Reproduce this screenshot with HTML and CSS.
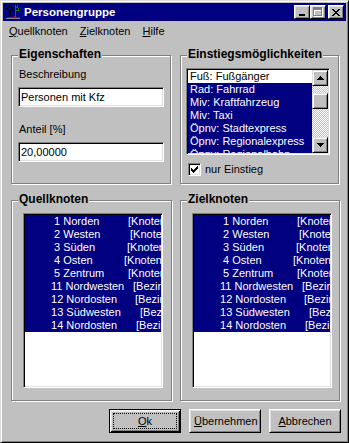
FILE: index.html
```html
<!DOCTYPE html>
<html lang="de">
<head>
    <meta charset="UTF-8">
    <meta name="viewport" content="width=device-width, initial-scale=1.0">
    <title>Personengruppe</title>
    <link rel="stylesheet" href="styles.css">
</head>
<body>
    <div class="window">
        <div class="titlebar">
            <svg class="appicon" width="16" height="16" viewBox="0 0 16 16">
                <path fill="#000" d="M2 2h5v1H2z M1 3h2v2H1z M6 3h2v3H6z M5 6h2v1H5z M4 7h2v2H4z M4 10h2v2H4z"/>
                <path fill="#008000" d="M10 1h1v12h-1z M11 3h2v1h-2z M12 1h1v2h-1z M11 6h3v1h-3z M13 4h1v2h-1z"/>
                <path fill="#c00000" d="M2 13h13v1H2z M9 12h1v1H9z"/>
                <path fill="#808080" d="M1 14h14v1H1z"/>
            </svg>
            <span class="title">Personengruppe</span>
            <div class="caption-btns">
                <span class="cbtn">
                    <svg width="8" height="7" viewBox="0 0 8 7"><path fill="#000" d="M1 5h6v2H1z"/></svg>
                </span>
                <span class="cbtn">
                    <svg width="10" height="10" viewBox="0 0 10 10">
                        <path fill="#fff" d="M1 1h9v9H1z M2 4h7v5H2z" fill-rule="evenodd"/>
                        <path fill="#808080" d="M0 0h9v9H0z M1 3h7v5H1z" fill-rule="evenodd"/>
                    </svg>
                </span>
                <span class="cbtn close">
                    <svg width="8" height="7" viewBox="0 0 8 7"><path fill="#000" d="M0 0h2v1H0z M6 0h2v1H6z M1 1h2v1H1z M5 1h2v1H5z M2 2h4v1H2z M3 3h2v1H3z M2 4h4v1H2z M1 5h2v1H1z M5 5h2v1H5z M0 6h2v1H0z M6 6h2v1H6z"/></svg>
                </span>
            </div>
        </div>
        <div class="menubar">
            <span class="menu"><u>Q</u>uellknoten</span>
            <span class="menu"><u>Z</u>ielknoten</span>
            <span class="menu"><u>H</u>ilfe</span>
        </div>
        <div class="client">
            <div class="row top">
                <div class="group g-eig">
                    <div class="legend">Eigenschaften</div>
                    <div class="label">Beschreibung</div>
                    <div class="edit">Personen mit Kfz</div>
                    <div class="label l2">Anteil [%]</div>
                    <div class="edit">20,00000</div>
                </div>
                <div class="group g-ein">
                    <div class="legend">Einstiegsmöglichkeiten</div>
                    <div class="listbox small">
                        <div class="items">
                            <div class="item">Fuß: Fußgänger</div>
                            <div class="item sel">Rad: Fahrrad</div>
                            <div class="item sel">Miv: Kraftfahrzeug</div>
                            <div class="item sel">Miv: Taxi</div>
                            <div class="item sel">Öpnv: Stadtexpress</div>
                            <div class="item sel">Öpnv: Regionalexpress</div>
                            <div class="item sel">Öpnv: Regionalbahn</div>
                        </div>
                        <div class="vscroll">
                            <span class="sbtn">
                                <svg width="7" height="4" viewBox="0 0 7 4"><path fill="#000" d="M3 0h1v1H3z M2 1h3v1H2z M1 2h5v1H1z M0 3h7v1H0z"/></svg>
                            </span>
                            <span class="sbtn thumb"></span>
                            <span class="sbtn down">
                                <svg width="7" height="4" viewBox="0 0 7 4"><path fill="#000" d="M0 0h7v1H0z M1 1h5v1H1z M2 2h3v1H2z M3 3h1v1H3z"/></svg>
                            </span>
                        </div>
                    </div>
                    <div class="check">
                        <span class="box">
                            <svg width="7" height="7" viewBox="0 0 7 7"><path fill="#000" d="M6 0h1v1H6z M5 1h2v1H5z M0 2h1v1H0z M4 2h3v1H4z M0 3h2v1H0z M3 3h3v1H3z M0 4h5v1H0z M1 5h3v1H1z M2 6h1v1H2z"/></svg>
                        </span>
                        <span>nur Einstieg</span>
                    </div>
                </div>
            </div>
            <div class="row bottom">
                <div class="group g-quell">
                    <div class="legend">Quellknoten</div>
                    <div class="listbox big">
                        <div class="node sel"><span>  1 Norden</span><span class="tag">[Knoten]</span></div>
                        <div class="node sel"><span>  2 Westen</span><span class="tag">[Knoten]</span></div>
                        <div class="node sel"><span>  3 Süden</span><span class="tag">[Knoten]</span></div>
                        <div class="node sel"><span>  4 Osten</span><span class="tag">[Knoten]</span></div>
                        <div class="node sel"><span>  5 Zentrum</span><span class="tag">[Knoten]</span></div>
                        <div class="node sel"><span> 11 Nordwesten</span><span class="tag">[Bezirk]</span></div>
                        <div class="node sel"><span> 12 Nordosten</span><span class="tag">[Bezirk]</span></div>
                        <div class="node sel"><span> 13 Südwesten</span><span class="tag">[Bezirk]</span></div>
                        <div class="node sel"><span> 14 Nordosten</span><span class="tag">[Bezirk]</span></div>
                    </div>
                </div>
                <div class="group g-ziel">
                    <div class="legend">Zielknoten</div>
                    <div class="listbox big">
                        <div class="node sel"><span>  1 Norden</span><span class="tag">[Knoten]</span></div>
                        <div class="node sel"><span>  2 Westen</span><span class="tag">[Knoten]</span></div>
                        <div class="node sel"><span>  3 Süden</span><span class="tag">[Knoten]</span></div>
                        <div class="node sel"><span>  4 Osten</span><span class="tag">[Knoten]</span></div>
                        <div class="node sel"><span>  5 Zentrum</span><span class="tag">[Knoten]</span></div>
                        <div class="node sel"><span> 11 Nordwesten</span><span class="tag">[Bezirk]</span></div>
                        <div class="node sel"><span> 12 Nordosten</span><span class="tag">[Bezirk]</span></div>
                        <div class="node sel"><span> 13 Südwesten</span><span class="tag">[Bezirk]</span></div>
                        <div class="node sel"><span> 14 Nordosten</span><span class="tag">[Bezirk]</span></div>
                    </div>
                </div>
            </div>
            <div class="buttons">
                <button class="btn default"><span class="focus"><u>O</u>k</span></button>
                <button class="btn"><span class="focus"><u>Ü</u>bernehmen</span></button>
                <button class="btn"><span class="focus"><u>A</u>bbrechen</span></button>
            </div>
        </div>
    </div>
</body>
</html>
```

FILE: styles.css
```css
* {
    margin: 0;
    padding: 0;
    box-sizing: border-box;
}
body {
    width: 349px;
    height: 443px;
    background: #c0c0c0;
    font-family: "Liberation Sans", Arial, sans-serif;
    font-size: 11px;
    color: #000;
}
.window {
    width: 349px;
    height: 443px;
    display: flex;
    flex-direction: column;
    background: #c0c0c0;
    border: 1px solid;
    border-color: #dfdfdf #000 #000 #dfdfdf;
    box-shadow: inset 1px 1px #fff, inset -1px -1px #808080;
    padding: 2px;
}

/* title bar */
.titlebar {
    height: 18px;
    display: flex;
    align-items: center;
    background: #000080;
    color: #fff;
    padding-left: 2px;
}
.appicon {
    margin-right: 3px;
}
.title {
    font-weight: bold;
    font-size: 11.5px;
}
.caption-btns {
    margin-left: auto;
    margin-right: 2px;
    display: flex;
}
.cbtn {
    width: 16px;
    height: 14px;
    display: flex;
    align-items: center;
    justify-content: center;
    background: #c0c0c0;
    border: 1px solid;
    border-color: #fff #000 #000 #fff;
    box-shadow: inset 1px 1px #dfdfdf, inset -1px -1px #808080;
}
.cbtn.close {
    margin-left: 2px;
}

/* menu */
.menubar {
    height: 19px;
    padding-top: 1px;
    line-height: 18px;
    display: flex;
}
.menu {
    padding: 0 6px;
}

.client {
    flex: 1;
    display: flex;
    flex-direction: column;
    padding: 15px 5px 7px 8px;
}
.row {
    display: flex;
}

/* group boxes */
.group {
    display: flex;
    flex-direction: column;
    align-items: flex-start;
    border: 1px solid #808080;
    box-shadow: inset 1px 1px #fff, 1px 1px #fff;
    padding: 0 6px;
}
.top .group {
    height: 129px;
}
.g-eig {
    width: 160px;
}
.g-ein {
    width: 159px;
    margin-left: 9px;
}
.bottom {
    margin-top: 16px;
    gap: 8px;
}
.bottom .group {
    height: 201px;
}
.g-quell {
    width: 161px;
}
.g-ziel {
    width: 160px;
}
.legend {
    font-weight: bold;
    font-size: 12px;
    line-height: 13px;
    margin-top: -8px;
    padding: 0 1px;
    background: #c0c0c0;
}
.label {
    line-height: 13px;
    padding-left: 1px;
    margin-top: 7px;
}
.label.l2 {
    margin-top: 16px;
}

/* sunken fields */
.edit, .listbox, .box {
    background: #fff;
    border: 1px solid;
    border-color: #808080 #fff #fff #808080;
    box-shadow: inset 1px 1px #000, inset -1px -1px #dfdfdf;
}
.edit {
    width: 146px;
    height: 20px;
    margin-top: 6px;
    padding: 1px 2px;
    line-height: 16px;
}
.listbox {
    padding: 1px;
    overflow: hidden;
    margin-top: 7px;
}
.listbox.small {
    width: 144px;
    height: 87px;
    margin-left: -1px;
    display: flex;
}
.items {
    flex: 1;
    overflow: hidden;
}
.item {
    line-height: 13px;
    padding-left: 2px;
    white-space: nowrap;
}
.sel {
    background: #000080;
    color: #fff;
}

/* scrollbar */
.vscroll {
    width: 16px;
    display: flex;
    flex-direction: column;
    background: repeating-conic-gradient(#c0c0c0 0 25%, #fff 0 50%) 0 0 / 2px 2px;
}
.sbtn {
    width: 16px;
    height: 16px;
    display: flex;
    align-items: center;
    justify-content: center;
    background: #c0c0c0;
    border: 1px solid;
    border-color: #dfdfdf #000 #000 #dfdfdf;
    box-shadow: inset 1px 1px #fff, inset -1px -1px #808080;
}
.sbtn.thumb {
    margin-top: 7px;
}
.sbtn.down {
    margin-top: auto;
}

/* checkbox */
.check {
    display: flex;
    align-items: center;
    margin-top: 8px;
    margin-left: 1px;
    line-height: 13px;
}
.box {
    width: 13px;
    height: 13px;
    display: flex;
    align-items: center;
    justify-content: center;
    margin-right: 4px;
}

/* node lists */
.listbox.big {
    width: 140px;
    height: 175px;
    margin-left: 5px;
}
.node {
    display: grid;
    grid-template-columns: 76px auto;
    padding-left: 23px;
    line-height: 13px;
    white-space: pre;
}
.node:nth-child(1) .tag { margin-left: 4px; }
.node:nth-child(2) .tag { margin-left: 6px; }
.node:nth-child(3) .tag { margin-left: 3px; }
.node:nth-child(4) .tag { margin-left: 0; }
.node:nth-child(5) .tag { margin-left: 4px; }
.node:nth-child(6) .tag { margin-left: 9px; }
.node:nth-child(7) .tag { margin-left: 11px; }
.node:nth-child(8) .tag { margin-left: 16px; }
.node:nth-child(9) .tag { margin-left: 12px; }

/* buttons */
.buttons {
    display: flex;
    justify-content: flex-end;
    gap: 8px;
    margin-top: 8px;
}
.btn {
    width: 72px;
    height: 24px;
    padding: 3px;
    display: flex;
    font: inherit;
    color: #000;
    background: #c0c0c0;
    border: 1px solid;
    border-color: #fff #000 #000 #fff;
    box-shadow: inset 1px 1px #dfdfdf, inset -1px -1px #808080;
}
.btn.default {
    border-color: #000;
    box-shadow: inset 1px 1px #fff, inset -1px -1px #000, inset 2px 2px #dfdfdf, inset -2px -2px #808080;
}
.focus {
    flex: 1;
    display: flex;
    align-items: center;
    justify-content: center;
    line-height: 14px;
    border: 1px solid transparent;
}
.default .focus {
    border: 1px dotted #000;
}
```
